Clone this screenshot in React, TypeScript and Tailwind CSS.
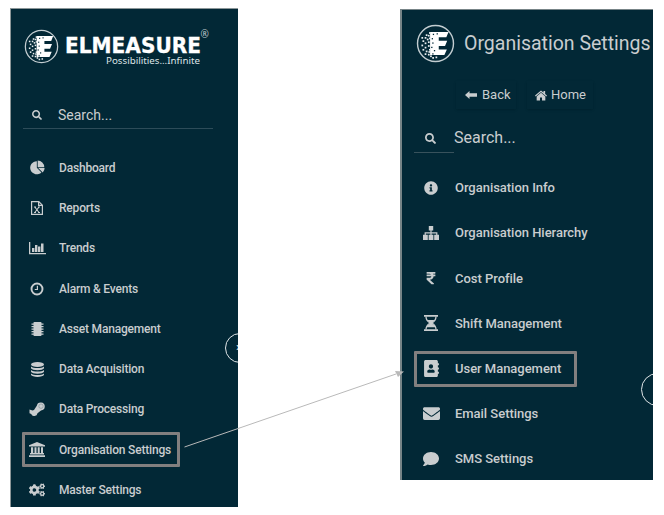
import type { ReactNode } from "react";
import {
  FaAddressBook, FaCogs, FaComment, FaEnvelope,
  FaInfoCircle, FaRupeeSign, FaSearch,
} from "react-icons/fa";

const dots = [
  [11, 10], [12, 7.5], [8, 12], [10, 13.5], [6, 15], [8, 17], [11, 16], [5, 19], [8, 21],
  [11, 19.5], [6, 23], [9, 24.5], [12, 23], [8, 27], [11, 27.5], [13, 29], [15, 30.5], [18, 30], [12, 12.5], [5, 12], [9, 9.5], [11.5, 25],
];
const holes = [[15.5, 9], [19, 8.5], [14.5, 13], [15, 17], [14, 21], [16.5, 24], [15, 27]];

function Emblem({ className }: { className: string }) {
  return (
    <svg viewBox="0 0 36 36" className={className} fill="none">
      <circle cx="18" cy="18" r="16.6" stroke="#c3cdd1" strokeWidth="1.3" />
      <path fill="#fff" d="M13 7.300h17l-2 5H21v3.200h7.800l-2 4.800H21v3.200h7.500l-2.300 5.200H13z" />
      {dots.map(([x, y], i) => <rect key={i} x={x} y={y} width="1.6" height="1.6" fill="#e9eef0" />)}
      {holes.map(([x, y], i) => <rect key={i} x={x} y={y} width="1.2" height="1.2" fill="#022836" />)}
    </svg>
  );
}

const Pie = () => (
  <svg viewBox="0 0 16 16" className="h-[15px] w-[15px]" fill="currentColor">
    <path d="M7.300 1.300V8.300l4.900 4.900A7 7 0 1 1 7.300 1.300zM8.800 8.500H15.600a6.800 6.800 0 0 1-2 4.800zM8.200 .6A7 7 0 0 1 15.200 7.600H8.200z" />
  </svg>
);
const Excel = () => (
  <svg viewBox="0 0 12 14" className="h-[14px] w-3" fill="none" stroke="currentColor">
    <path d="M.6.6h7.200l3.600 3.600v9.200H.6zM7.600.6v3.800h3.800" strokeWidth="1.200" />
    <path d="M3.800 6l4.200 5.500M8 6l-4.200 5.500M3 6h2M7 6h2M3 11.500h2M7 11.500h2" strokeWidth="1.100" />
  </svg>
);
const Bars = () => (
  <svg viewBox="0 0 17 14" className="h-[14px] w-[17px]" fill="currentColor">
    <path d="M0 1h1.300v11H17v1.200H0zM3 7h2.400v4H3zM6 4h2.400v7H6zM9 5.500h2.400V11H9zM12 2.500h2.500V11H12z" />
  </svg>
);
const Clock = () => (
  <svg viewBox="0 0 14 14" className="h-[14px] w-[14px]" fill="none" stroke="currentColor">
    <circle cx="7" cy="7" r="5.500" strokeWidth="1.900" />
    <path d="M7.400 3.800v3.700H4.800" strokeWidth="1.200" />
  </svg>
);
const Chip = () => (
  <svg viewBox="0 0 13 14" className="h-[14px] w-[13px]" fill="currentColor">
    <rect x="2.500" width="8" height="14" rx=".8" />
    <path d="M.5 1.500h12v1.200H.5zM.5 4h12v1.200H.5zM.5 6.500h12v1.200H.5zM.5 9h12v1.200H.5zM.5 11.500h12v1.200H.5z" />
  </svg>
);
const Database = () => (
  <svg viewBox="0 0 13 15" className="h-[15px] w-[13px]" fill="currentColor">
    <ellipse cx="6.500" cy="2.500" rx="6.500" ry="2.500" />
    <path d="M0 4.400c2 2 11 2 13 0v1.800c-1 2.600-12 2.600-13 0zM0 7.900c2 2 11 2 13 0v1.800c-1 2.600-12 2.600-13 0zM0 11.400c2 2 11 2 13 0v1.400c-1 2.800-12 2.800-13 0z" />
  </svg>
);
const Steam = () => (
  <svg viewBox="0 0 16 14" className="h-[14px] w-4" fill="currentColor">
    <path d="M7.800 3.800A4 4 0 1 1 12 8.400L8.500 11.200A3.300 3.300 0 0 1 2.200 12L.5 11.200V7.500l3 1a3.200 3.200 0 0 1 1.500-.6z" />
    <circle cx="12" cy="4.200" r="2.200" fill="none" stroke="#6f838b" strokeWidth=".5" />
  </svg>
);
const Bank = () => (
  <svg viewBox="0 0 16 15" className="h-[15px] w-4" fill="currentColor">
    <path d="M8 0l8 3.200v1.300H0V3.200zM2 5.300h2.200v5.800h1.300V5.300h2v5.800h1.200V5.300h2v5.800H12V5.300h2v5.800h1v1.300H1v-1.300h1zM0 13.200h16V15H0z" />
  </svg>
);
const Sitemap = () => (
  <svg viewBox="0 0 16 14" className="h-[14px] w-4" fill="currentColor">
    <path d="M5.800 0h4.400v4.600H8.600V6.300h5.800v2.500H16V14h-4.800V8.800h2V7.400H8.600v1.400h1.800V14H5.600V8.800h1.800V7.400H2.800v1.400h2V14H0V8.800h1.600V6.300h5.800V4.600H5.800z" />
  </svg>
);
const Hourglass = () => (
  <svg viewBox="0 0 14 16" className="h-4 w-[14px]" fill="currentColor">
    <path d="M0 0h14v1.700H0zM0 14.300h14V16H0z" />
    <path d="M2 1.500c0 3 1.700 5 4 6.500-2.300 1.500-4 3.500-4 6.500M12 1.500c0 3-1.700 5-4 6.500 2.300 1.500 4 3.500 4 6.500" fill="none" stroke="currentColor" strokeWidth="1.300" />
    <path d="M3.400 5h7.200L8 8l1 1.500L11.300 11v1.200H2.700V11L5 9.500 6 8z" />
  </svg>
);
const ArrowLeft = () => (
  <svg viewBox="0 0 12 8" className="h-2 w-3 shrink-0" fill="currentColor"><path d="M4.500 0v2.200H12v3.600H4.500V8L0 4z" /></svg>
);
const Home = () => (
  <svg viewBox="0 0 13 11" className="h-[11px] w-3 shrink-0" fill="currentColor">
    <path d="M6.500 0l2.700 2.300V.7H11v3.200l2 1.700-.8.900-5.700-4.900L.8 6.500 0 5.600zM6.500 2.500l4.700 4V11H7.600V7.800H5.400V11H1.800V6.500z" />
  </svg>
);

type Item = { label: string; icon: ReactNode; boxed?: boolean };

const mainMenu: Item[] = [
  { label: "Dashboard", icon: <Pie /> },
  { label: "Reports", icon: <Excel /> },
  { label: "Trends", icon: <Bars /> },
  { label: "Alarm & Events", icon: <Clock /> },
  { label: "Asset Management", icon: <Chip /> },
  { label: "Data Acquisition", icon: <Database /> },
  { label: "Data Processing", icon: <Steam /> },
  { label: "Organisation Settings", icon: <Bank />, boxed: true },
  { label: "Master Settings", icon: <FaCogs className="h-4 w-4" /> },
];
const settingsMenu: Item[] = [
  { label: "Organisation Info", icon: <FaInfoCircle className="h-[14px] w-[14px]" /> },
  { label: "Organisation Hierarchy", icon: <Sitemap /> },
  { label: "Cost Profile", icon: <FaRupeeSign className="h-[14px] w-[10px]" /> },
  { label: "Shift Management", icon: <Hourglass /> },
  { label: "User Management", icon: <FaAddressBook className="h-[17px] w-[17px]" />, boxed: true },
  { label: "Email Settings", icon: <FaEnvelope className="h-[17px] w-[17px]" /> },
  { label: "SMS Settings", icon: <FaComment className="h-4 w-4" /> },
];

export default function App() {
  return (
    <div className="relative flex h-[515px] w-[664px] overflow-hidden bg-white font-['Roboto',sans-serif] text-[#c9cdcf]">
      <aside className="relative ml-[10px] mt-2 h-[499px] w-[228px] overflow-hidden border-l border-t border-[#8b9698] bg-[#022836]">
        <header className="flex h-[86px] pl-[13px] pt-[20px]">
          <Emblem className="h-[35px] w-[35px]" />
          <svg width="160" height="42" viewBox="0 0 160 42" className="-mt-[2px] ml-1 shrink-0" fill="#fff">
            <text x="2" y="25.500" fontFamily="DejaVu Sans" fontWeight="700" fontSize="20.500" textLength="136" lengthAdjust="spacingAndGlyphs" stroke="#fff" strokeWidth=".3">ELMEASURE</text>
            <text x="43" y="36.500" fontFamily="Noto Sans" fontSize="9.500" textLength="94" lengthAdjust="spacingAndGlyphs" fill="#dfe5e7">Possibilities...Infinite</text>
            <text x="137.500" y="10.500" fontFamily="Open Sans" fontSize="10" fill="#c3cdd1">®</text>
          </svg>
        </header>
        <div className="ml-3 flex h-[34px] w-[190px] items-center border-b border-[#2d4c59] pt-[7px]">
          <FaSearch className="ml-[9px] h-[10px] w-[10px]" />
          <span className="ml-4 text-sm leading-4">Search...</span>
        </div>
        <nav className="mt-[18.5px]">
          {mainMenu.map((m) => (
            <div key={m.label} className="flex h-[40.3px] items-center pl-[11px]">
              <div className={m.boxed ? "flex h-[35px] w-[158px] items-center rounded-[1px] border-[3px] border-[#827f7f]" : "flex h-[35px] w-[158px] items-center border-[3px] border-transparent"}>
                <span className="flex w-[24px] shrink-0 justify-center">{m.icon}</span>
                <span className="ml-[10px] whitespace-nowrap text-xs font-medium tracking-[-0.19px]">{m.label}</span>
              </div>
            </div>
          ))}
        </nav>
        <div className="absolute left-[214px] top-[324px] h-[30px] w-[30px] rounded-full border border-[#dfe5e7] pl-[10px] text-[13px] leading-[26px] text-white">›</div>
      </aside>
      <aside className="relative ml-[162px] mt-[9px] h-[471px] w-[253px] overflow-hidden border-l-2 border-t border-[#778487] bg-[#022836]">
        <header className="flex h-[67px] items-center pl-[14px]">
          <Emblem className="h-[39px] w-[39px] shrink-0" />
          <h1 className="ml-[9px] whitespace-nowrap text-[19.5px]">Organisation Settings</h1>
        </header>
        <div className="flex h-[36px] pl-[54px] pt-1 text-[13px]">
          <button className="flex h-7 w-[60px] items-center gap-[5px] pl-[9px] shadow-sm"><ArrowLeft />Back</button>
          <button className="ml-[11px] flex h-7 w-[66px] items-center gap-1 pl-[8px] shadow-sm"><Home />Home</button>
        </div>
        <div className="ml-3 flex h-[40px] items-center">
          <div className="flex h-full w-10 items-center border-b border-[#38525c]"><FaSearch className="ml-[11px] mt-[11px] h-[11px] w-[11px]" /></div>
          <span className="mt-[9px] text-base leading-5">Search...</span>
        </div>
        <nav className="mt-[12.5px]">
          {settingsMenu.map((m) => (
            <div key={m.label} className="flex h-[45.15px] items-center pl-3">
              <div className={m.boxed ? "flex h-9 w-[163px] items-center rounded-[1px] border-[3px] border-[#827f7f]" : "flex h-9 w-[163px] items-center border-[3px] border-transparent"}>
                <span className="flex w-[28px] shrink-0 justify-center">{m.icon}</span>
                <span className="ml-[10px] whitespace-nowrap text-[13px] font-medium tracking-[-0.03px]">{m.label}</span>
              </div>
            </div>
          ))}
        </nav>
        <div className="absolute left-[239px] top-[363px] h-[33px] w-[33px] rounded-full border border-[#dfe5e7]" />
      </aside>
      <svg className="absolute inset-0" width="664" height="515">
        <path d="M184.500 447L396 374" stroke="#b9b9b9" strokeWidth="1" />
        <path d="M404 371.500l-9-.5 3 6z" fill="#b9b9b9" />
      </svg>
    </div>
  );
}
